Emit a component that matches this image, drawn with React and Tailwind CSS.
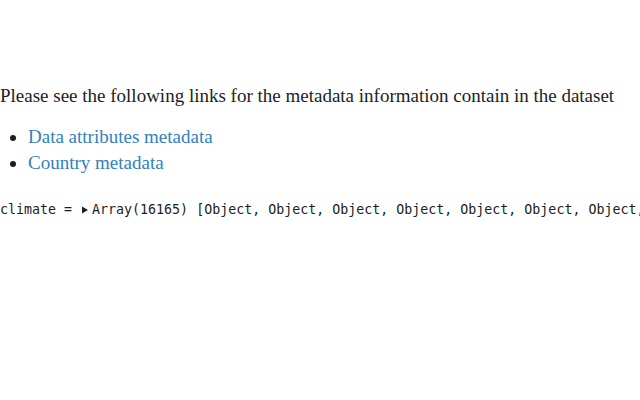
export default function App() {
  return (
    <div className="w-[640px] h-[400px] bg-white overflow-hidden text-[#1b1e23]">
      <div className="pt-[83px]" style={{ fontFamily: '"Liberation Serif", serif' }}>
        <p className="text-[19px] leading-[26px] whitespace-nowrap">
          Please see the following links for the metadata information contain in the dataset
        </p>
        <ul className="mt-[15px] pl-[28px] list-disc text-[19px] leading-[26px]">
          <li><a className="text-[#3182bd]">Data attributes metadata</a></li>
          <li><a className="text-[#3182bd]">Country metadata</a></li>
        </ul>
      </div>
      <div
        className="mt-[25px] text-[13.3px] leading-[17px] whitespace-pre flex items-center"
        style={{ fontFamily: '"DejaVu Sans Mono", monospace' }}
      >
        <span className="shrink-0">climate = </span>
        <svg width="8" height="8" viewBox="0 0 8 8" className="shrink-0 ml-[1px] mr-[3px]">
          <path d="M1 0.5 L7 4 L1 7.5 Z" fill="#1b1e23" />
        </svg>
        <span className="shrink-0">Array(16165) [Object, Object, Object, Object, Object, Object, Object, Object, Object]</span>
      </div>
    </div>
  );
}
